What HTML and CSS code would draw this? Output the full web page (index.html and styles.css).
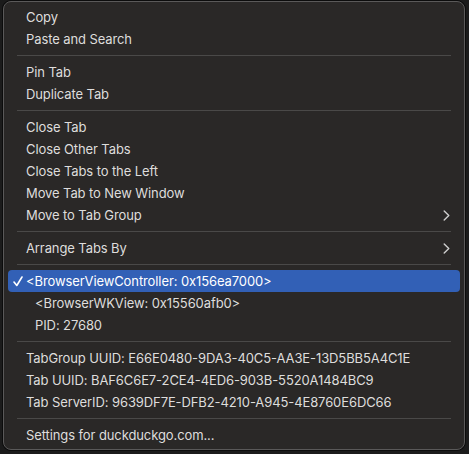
FILE: index.html
```html
<!DOCTYPE html>
<html>
<head>
<meta charset="utf-8">
<link rel="stylesheet" href="styles.css">
</head>
<body>
<div class="menu">
  <div class="item">Copy</div>
  <div class="item">Paste and Search</div>
  <div class="sep"></div>
  <div class="item">Pin Tab</div>
  <div class="item">Duplicate Tab</div>
  <div class="sep"></div>
  <div class="item">Close Tab</div>
  <div class="item">Close Other Tabs</div>
  <div class="item">Close Tabs to the Left</div>
  <div class="item">Move Tab to New Window</div>
  <div class="item sub">Move to Tab Group<svg class="chev" width="7" height="11" viewBox="0 0 7 11"><polyline points="1.2,1 5.8,5.5 1.2,10" fill="none" stroke="#cfcfcf" stroke-width="1.4" stroke-linecap="round" stroke-linejoin="round"/></svg></div>
  <div class="sep"></div>
  <div class="item sub">Arrange Tabs By<svg class="chev" width="7" height="11" viewBox="0 0 7 11"><polyline points="1.2,1 5.8,5.5 1.2,10" fill="none" stroke="#cfcfcf" stroke-width="1.4" stroke-linecap="round" stroke-linejoin="round"/></svg></div>
  <div class="sep"></div>
  <div class="item selected"><svg class="check" width="10" height="11" viewBox="0 0 10 11"><polyline points="1,6 3.8,9.5 9,1" fill="none" stroke="#ffffff" stroke-width="1.6" stroke-linecap="round" stroke-linejoin="round"/></svg>&lt;BrowserViewController: 0x156ea7000&gt;</div>
  <div class="item indent">&lt;BrowserWKView: 0x15560afb0&gt;</div>
  <div class="item indent">PID: 27680</div>
  <div class="sep"></div>
  <div class="item">TabGroup UUID: E66E0480-9DA3-40C5-AA3E-13D5BB5A4C1E</div>
  <div class="item">Tab UUID: BAF6C6E7-2CE4-4ED6-903B-5520A1484BC9</div>
  <div class="item">Tab ServerID: 9639DF7E-DFB2-4210-A945-4E8760E6DC66</div>
  <div class="sep"></div>
  <div class="item">Settings for duckduckgo.com...</div>
</div>
</body>
</html>
```

FILE: styles.css
```css
html, body {
  margin: 0;
  padding: 0;
  background: #1b1b1b;
  height: 454px;
  overflow: hidden;
}
body {
  padding: 1px 0 0 3px;
  box-sizing: border-box;
}
.menu {
  width: 462px;
  height: 449px;
  box-sizing: border-box;
  background: #2a2827;
  border: 1px solid #5a5959;
  box-shadow: 0 0 0 1px #0c0c0c;
  border-radius: 8px;
  padding: 4px;
  font-family: Inter, "Liberation Sans", sans-serif;
  font-size: 13px;
  color: #dedddc;
  display: flex;
  flex-direction: column;
}
.item {
  height: 22px;
  line-height: 22px;
  padding-left: 18px;
  display: flex;
  align-items: center;
  white-space: nowrap;
  border-radius: 4px;
  letter-spacing: -0.1px;
}
.sub {
  justify-content: space-between;
  padding-right: 10px;
}
.chev {
  display: block;
}
.sep {
  height: 11px;
  flex: none;
  position: relative;
  margin: 0 9px;
}
.sep::after {
  content: "";
  position: absolute;
  left: 0;
  right: 0;
  top: 5px;
  height: 1px;
  background: #4a4948;
}
.selected {
  background: #3260b6;
  color: #ffffff;
  padding-left: 5px;
}
.check {
  margin-right: 3px;
  display: block;
}
.indent {
  padding-left: 27px;
}
```
